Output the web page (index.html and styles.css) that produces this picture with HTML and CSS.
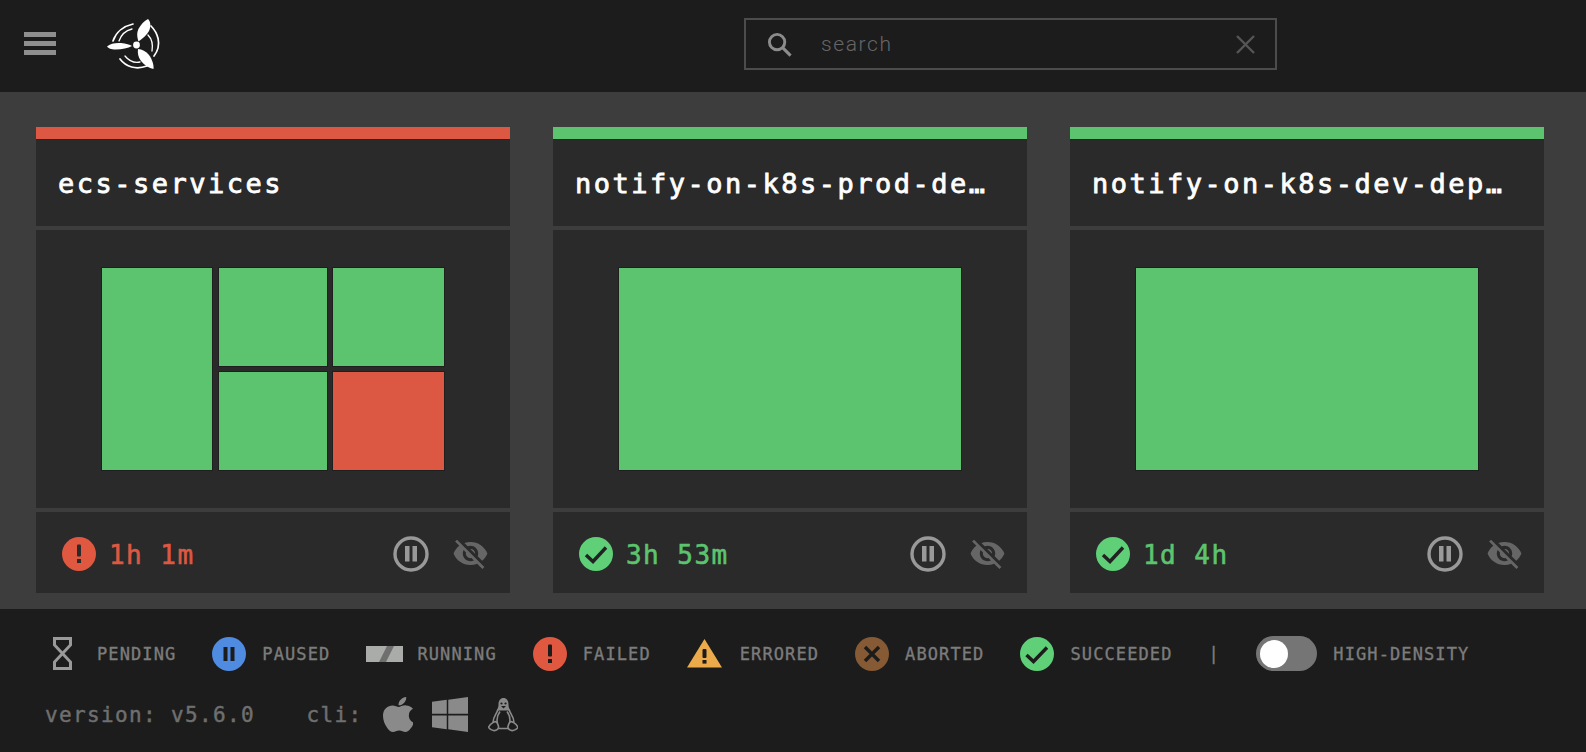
FILE: index.html
```html
<!DOCTYPE html>
<html lang="en">
<head>
<meta charset="utf-8">
<title>Concourse</title>
<link rel="stylesheet" href="styles.css">
</head>
<body>
<svg class="defs" width="0" height="0" aria-hidden="true">
  <symbol id="i-failed" viewBox="0 0 34 34"><circle cx="17" cy="17" r="17" fill="#e0583f"/><rect x="15" y="7.500" width="4" height="12" rx="1" fill="#2a2a2a"/><rect x="15" y="22" width="4" height="4" fill="#2a2a2a"/></symbol>
  <symbol id="i-ok" viewBox="0 0 34 34"><circle cx="17" cy="17" r="17" fill="#5fcf78"/><path d="M7 18l7 6.500L27 10.500" fill="none" stroke="#222" stroke-width="3.400"/></symbol>
  <symbol id="i-pause" viewBox="0 0 36 36"><circle cx="18" cy="18" r="16" fill="none" stroke="#999" stroke-width="3.400"/><rect x="12" y="10" width="4.500" height="15.500" fill="#999"/><rect x="19.500" y="10" width="4.500" height="15.500" fill="#999"/></symbol>
  <symbol id="i-eye" viewBox="0 0 24 24"><path fill="#666" d="M12 7c2.760 0 5 2.240 5 5 0 .65-.13 1.260-.36 1.830l2.920 2.920c1.510-1.260 2.700-2.890 3.430-4.750-1.730-4.390-6-7.500-11-7.500-1.400 0-2.740.25-3.980.7l2.160 2.160C10.740 7.130 11.350 7 12 7zM2 4.270l2.280 2.280.46.46C3.080 8.300 1.780 10.020 1 12c1.730 4.390 6 7.500 11 7.500 1.550 0 3.030-.3 4.380-.84l.42.42L19.730 22 21 20.730 3.270 3 2 4.270zM7.530 9.800l1.550 1.550c-.05.21-.08.43-.08.65 0 1.660 1.340 3 3 3 .22 0 .44-.03.65-.08l1.550 1.550c-.67.33-1.410.53-2.200.53-2.760 0-5-2.240-5-5 0-.79.2-1.530.53-2.200zm4.310-.78l3.150 3.150.02-.16c0-1.660-1.340-3-3-3l-.17.01z"/></symbol>
</svg>

<header class="topbar">
  <div class="burger"><span></span><span></span><span></span></div>
  <svg class="logo" viewBox="0 0 54 54" aria-label="Concourse logo">
    <g fill="#fff">
      <circle cx="29.500" cy="27" r="3.400"/>
      <path d="M0 28.500C3 25.500 9 24.500 14 25S23 26.500 25 28C21 30 15 31.500 9 31.500S2 30.500 0 28.500Z"/>
      <path d="M41 1C44 4 44 9 42 13S36 20 31.500 23.500C30 19 29.500 14 32 10S37 3 41 1Z"/>
      <path d="M46.500 51C42 50 37 47 34 43S30.500 35 31 31C35 31.500 39 33 42 37S47 47 46.500 51Z"/>
    </g>
    <g fill="none" stroke="#fff" stroke-linecap="round">
      <path d="M6 23C9 14 17 8 26 6" stroke-width="1.700"/>
      <path d="M12 23C14 17 19 12.500 25 11" stroke-width="1.300"/>
      <path d="M44 8C50 14 56 26 47 38" stroke-width="1.700"/>
      <path d="M41 17C45 21 46 27 45 33" stroke-width="1.300"/>
      <path d="M13 41C19 49 29 52 40 48" stroke-width="1.700"/>
      <path d="M18 38C22 43 28 45 33 44" stroke-width="1.300"/>
    </g>
  </svg>
  <div class="search">
    <svg class="search-icon" viewBox="0 0 26 26"><circle cx="10.500" cy="10.500" r="8" fill="none" stroke="#8c8c8c" stroke-width="3"/><path d="M16.500 16.500L24.500 24.500" stroke="#8c8c8c" stroke-width="3.200"/></svg>
    <span class="search-text">search</span>
    <svg class="search-clear" viewBox="0 0 19 19"><path d="M1 1L18 18M18 1L1 18" stroke="#555" stroke-width="2.400"/></svg>
  </div>
</header>

<main class="board">
  <article class="card">
    <div class="bar bar-red"></div>
    <h2 class="title">ecs-services</h2>
    <div class="body">
      <div class="tree">
        <div class="leaf green tall"></div>
        <div class="leaf green"></div>
        <div class="leaf green"></div>
        <div class="leaf green"></div>
        <div class="leaf red"></div>
      </div>
    </div>
    <div class="foot">
      <svg class="status"><use href="#i-failed"/></svg>
      <span class="time t-red">1h 1m</span>
      <svg class="pause"><use href="#i-pause"/></svg>
      <svg class="eye"><use href="#i-eye"/></svg>
    </div>
  </article>

  <article class="card">
    <div class="bar bar-green"></div>
    <h2 class="title">notify-on-k8s-prod-de…</h2>
    <div class="body"><div class="tree single"><div class="leaf green"></div></div></div>
    <div class="foot">
      <svg class="status"><use href="#i-ok"/></svg>
      <span class="time t-green">3h 53m</span>
      <svg class="pause"><use href="#i-pause"/></svg>
      <svg class="eye"><use href="#i-eye"/></svg>
    </div>
  </article>

  <article class="card">
    <div class="bar bar-green"></div>
    <h2 class="title">notify-on-k8s-dev-dep…</h2>
    <div class="body"><div class="tree single"><div class="leaf green"></div></div></div>
    <div class="foot">
      <svg class="status"><use href="#i-ok"/></svg>
      <span class="time t-green">1d 4h</span>
      <svg class="pause"><use href="#i-pause"/></svg>
      <svg class="eye"><use href="#i-eye"/></svg>
    </div>
  </article>
</main>

<footer class="footer">
  <div class="legend">
    <div class="item">
      <svg class="ic ic-glass" viewBox="0 0 19 33"><path d="M1.500 1.500H17.500V8L1.500 25V31.500H17.500V25L1.500 8Z" fill="none" stroke="#9a9a9a" stroke-width="3"/></svg>
      <span class="label">PENDING</span>
    </div>
    <div class="item">
      <svg class="ic" viewBox="0 0 34 34"><circle cx="17" cy="17" r="17" fill="#4f8be0"/><rect x="11.500" y="10" width="4" height="14" fill="#1c1c1c"/><rect x="18.500" y="10" width="4" height="14" fill="#1c1c1c"/></svg>
      <span class="label">PAUSED</span>
    </div>
    <div class="item">
      <svg class="ic ic-run" viewBox="0 0 37 16"><rect width="37" height="16" fill="#a9aca9"/><path d="M13 16L21 0H28L20 16Z" fill="#6f6f6f"/></svg>
      <span class="label">RUNNING</span>
    </div>
    <div class="item">
      <svg class="ic" viewBox="0 0 34 34"><circle cx="17" cy="17" r="17" fill="#e0583f"/><rect x="15" y="7.500" width="4" height="12" rx="1" fill="#1c1c1c"/><rect x="15" y="22" width="4" height="4" fill="#1c1c1c"/></svg>
      <span class="label">FAILED</span>
    </div>
    <div class="item">
      <svg class="ic ic-warn" viewBox="0 0 35 29"><path d="M17.500 0L35 28.500H0Z" fill="#ecab4a"/><rect x="15.500" y="10" width="4" height="9" rx="1" fill="#1c1c1c"/><rect x="15.500" y="21" width="4" height="3.600" fill="#1c1c1c"/></svg>
      <span class="label">ERRORED</span>
    </div>
    <div class="item">
      <svg class="ic" viewBox="0 0 34 34"><circle cx="17" cy="17" r="17" fill="#855a34"/><path d="M10 10L24 24M24 10L10 24" stroke="#1c1c1c" stroke-width="3.400"/></svg>
      <span class="label">ABORTED</span>
    </div>
    <div class="item">
      <svg class="ic" viewBox="0 0 34 34"><circle cx="17" cy="17" r="17" fill="#5fcf78"/><path d="M6.500 18l7 6.500L27 10.500" fill="none" stroke="#1c1c1c" stroke-width="3.400"/></svg>
      <span class="label">SUCCEEDED</span>
    </div>
    <span class="label sep">|</span>
    <div class="item">
      <div class="toggle"><span class="knob"></span></div>
      <span class="label">HIGH-DENSITY</span>
    </div>
  </div>
  <div class="meta">
    <span class="version">version: v5.6.0</span>
    <span class="version cli">cli:</span>
    <svg class="os os-apple" viewBox="4 32 365 448" preserveAspectRatio="none"><path fill="#8a8a8a" d="M318.700 268.700c-.2-36.700 16.400-64.400 50-84.800-18.800-26.900-47.200-41.700-84.700-44.600-35.500-2.800-74.300 20.700-88.500 20.700-15 0-49.400-19.700-76.400-19.700C63.300 141.200 4 184.800 4 273.500q0 39.300 14.400 81.200c12.800 36.700 59 126.700 107.200 125.200 25.200-.6 43-17.900 75.800-17.900 31.800 0 48.300 17.900 76.400 17.900 48.600-.7 90.400-82.500 102.600-119.300-65.200-30.700-61.700-90-61.700-91.900zm-56.600-164.200c27.300-32.400 24.800-61.900 24-72.500-24.100 1.400-52 16.400-67.900 34.900-17.500 19.800-27.800 44.300-25.600 71.900 26.100 2 49.900-11.400 69.500-34.300z"/></svg>
    <svg class="os os-win" viewBox="0 32 448 448" preserveAspectRatio="none"><path fill="#8a8a8a" d="M0 93.700l183.600-25.300v177.400H0V93.700zm0 324.600l183.600 25.300V268.400H0v149.900zm202.200 28L448 480V268.400H202.200v178zm0-380.600v180.100H448V32L202.200 65.700z"/></svg>
    <svg class="os os-linux" viewBox="0 0 30 34">
      <path d="M10.500 7C10.500 3 12.500 .5 15.500 .5S20.500 3 20.500 7C20.500 9 21 11 22.500 13H8.500C10 11 10.500 9 10.500 7Z" fill="#8a8a8a"/>
      <circle cx="13.500" cy="6" r="1.100" fill="#1c1c1c"/><circle cx="17.500" cy="6" r="1.100" fill="#1c1c1c"/>
      <path d="M13 8.500H18L15.500 11Z" fill="#1c1c1c"/>
      <path d="M10 12C9 16 5 19 5 25M21 12C22 16 26 19 26 25M12 14C9 18 8.500 22 9.500 26M19 14C22 18 22.500 22 21.500 26" fill="none" stroke="#8a8a8a" stroke-width="1.600"/>
      <path d="M1 29C2 26.500 3.500 26 6 24.500S10 26.500 10.500 29 8 33.500 5.500 33 0 30.500 1 29ZM29.500 29C28.500 26.500 27 26 24.500 24.500S20.500 26.500 20 29 22.500 33.500 25 33 30.500 30.500 29.500 29ZM10.500 31H20" fill="#1c1c1c" stroke="#8a8a8a" stroke-width="1.600"/>
    </svg>
  </div>
</footer>
</body>
</html>
```

FILE: styles.css
```css
* { box-sizing: border-box; }
html, body { margin: 0; padding: 0; }
body {
  width: 1586px;
  height: 752px;
  overflow: hidden;
  background: #1c1c1c;
  font-family: "DejaVu Sans Mono", "Liberation Mono", monospace;
}
.defs { position: absolute; }

.topbar {
  height: 92px;
  background: #1c1c1c;
  display: flex;
  align-items: center;
  padding-left: 24px;
}
.burger {
  width: 32px;
  display: flex;
  flex-direction: column;
  gap: 4px;
  margin-top: -5px;
}
.burger span { height: 5px; background: #8f8f8f; }
.logo { width: 54px; height: 54px; margin-left: 51px; margin-top: -2px; flex: none; }
.search {
  margin-left: 583px;
  width: 533px;
  height: 52px;
  margin-top: -4px;
  border: 2px solid #4c4c4c;
  display: flex;
  align-items: center;
  padding-left: 21px;
  padding-right: 20px;
}
.search-icon { width: 25px; height: 25px; flex: none; }
.search-text {
  margin-left: 29px;
  color: #666;
  font-family: "Roboto", sans-serif;
  font-weight: 300;
  font-size: 21px;
  letter-spacing: 1.600px;
  flex: 1;
}
.search-clear { width: 19px; height: 19px; flex: none; }

.board {
  height: 517px;
  background: #3d3d3d;
  padding: 35px 42.500px 0 36px;
  display: grid;
  grid-template-columns: repeat(3, 1fr);
  column-gap: 43.500px;
  align-items: start;
}
.card { display: flex; flex-direction: column; min-width: 0; }
.bar { height: 13px; border-bottom: 1px solid #1d2a2a; }
.bar-red { background: #dd5842; }
.bar-green { background: #5cc46e; }
.title {
  margin: 0;
  height: 86px;
  background: #2a2a2a;
  display: flex;
  align-items: center;
  padding: 0 22px;
  color: #fff;
  font-size: 27px;
  font-weight: 400;
  letter-spacing: 2.500px;
  white-space: nowrap;
  -webkit-text-stroke: 0.8px #fff;
}
.body {
  margin-top: 4px;
  height: 278px;
  background: #2a2a2a;
  padding: 38px 66px;
}
.tree {
  height: 202px;
  display: grid;
  grid-template-columns: 110px 108px 111px;
  grid-template-rows: 98px 98px;
  column-gap: 6.500px;
  row-gap: 6px;
}
.tree.single { grid-template-columns: 1fr; grid-template-rows: 1fr; }
.leaf { box-shadow: 0 0 0 1px #1f1f1f; }
.green { background: #5cc46e; }
.red { background: #dd5842; }
.tall { grid-row: span 2; }
.foot {
  margin-top: 4px;
  height: 81px;
  background: #2a2a2a;
  display: flex;
  align-items: center;
  padding: 2px 21px 0 26px;
}
.status { width: 34px; height: 34px; flex: none; }
.time {
  margin-left: 13px;
  margin-top: 2px;
  font-size: 26px;
  letter-spacing: 1.450px;
  flex: 1;
  -webkit-text-stroke: 0.6px currentColor;
}
.t-red { color: #dd5842; }
.t-green { color: #5cc46e; }
.pause { width: 36px; height: 36px; flex: none; }
.eye { width: 37px; height: 37px; flex: none; margin-left: 23px; }

.footer { height: 143px; background: #1c1c1c; padding-top: 27px; }
.legend { display: flex; align-items: center; height: 35px; padding-left: 53px; }
.item { display: flex; align-items: center; gap: 16px; margin-right: 36px; }
.ic { width: 34px; height: 34px; flex: none; display: block; }
.ic-glass { width: 19px; height: 33px; margin-right: 9px; }
.ic-run { width: 37px; height: 16px; margin-right: -2px; }
.ic-warn { width: 35px; height: 29px; margin-right: 2px; }
.label {
  color: #7c7c7c;
  font-size: 17px;
  letter-spacing: 1.100px;
  white-space: nowrap;
  -webkit-text-stroke: 0.35px #7c7c7c;
}
.sep { margin-right: 36.500px; }
.toggle {
  width: 61px;
  height: 35px;
  border-radius: 18px;
  background: #757575;
  padding: 3.500px;
}
.knob { display: block; width: 28px; height: 28px; border-radius: 50%; background: #fff; }
.meta { display: flex; align-items: center; height: 35px; margin-top: 26px; padding-left: 45px; }
.version {
  color: #6f6f6f;
  font-size: 21px;
  letter-spacing: 1.350px;
  white-space: nowrap;
  -webkit-text-stroke: 0.45px #6f6f6f;
}
.cli { margin-left: 51.500px; }
.os { height: 35px; flex: none; display: block; }
.os-apple { width: 30px; margin-left: 20.500px; }
.os-win { width: 36px; margin-left: 19px; }
.os-linux { width: 30px; margin-left: 20px; }
```
